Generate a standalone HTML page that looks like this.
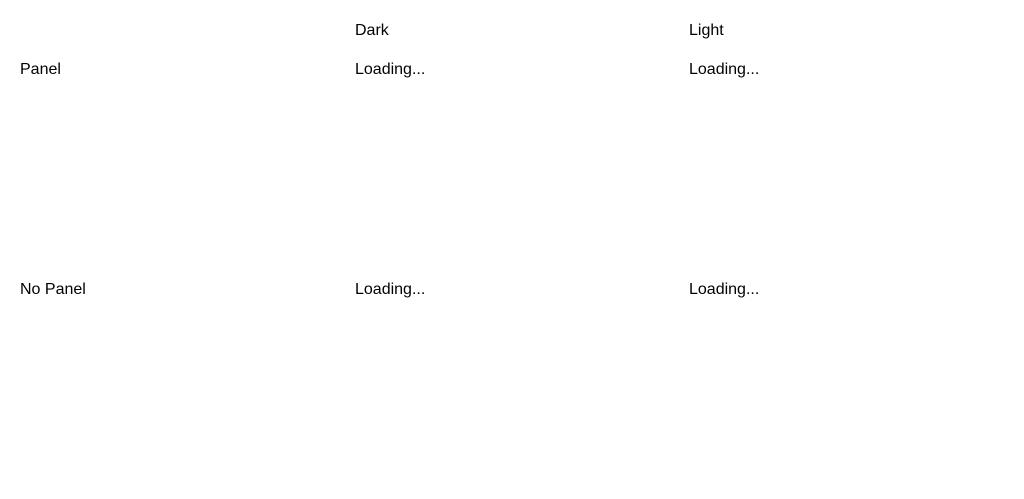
<!DOCTYPE html>
<html><head><style>
body{margin:0;background:#fff;font-family:"Liberation Sans",sans-serif;font-size:16px;color:#000;width:1024px;height:499px;position:relative;overflow:hidden}
div{position:absolute;line-height:18px}
</style></head><body>
<div style="left:355px;top:22px">Dark</div>
<div style="left:689px;top:22px">Light</div>
<div style="left:20px;top:61px">Panel</div>
<div style="left:355px;top:61px">Loading...</div>
<div style="left:689px;top:61px">Loading...</div>
<div style="left:20px;top:281px">No Panel</div>
<div style="left:355px;top:281px">Loading...</div>
<div style="left:689px;top:281px">Loading...</div>
</body></html>
